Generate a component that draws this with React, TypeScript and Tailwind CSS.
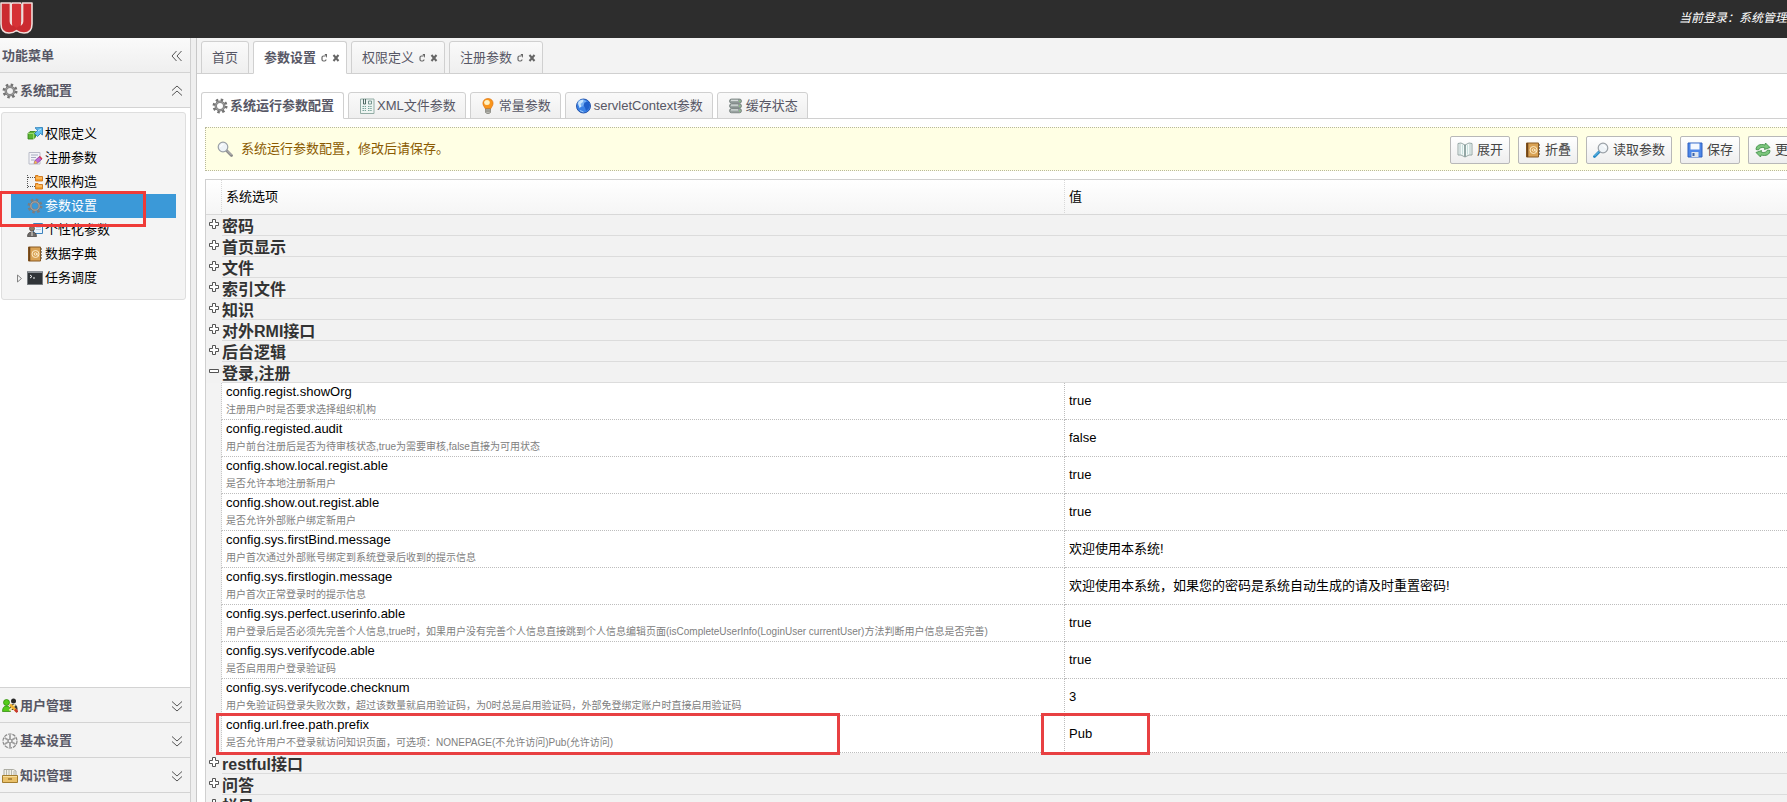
import type { ReactNode } from "react";

const sans = "font-['Liberation_Sans','Noto_Sans_CJK_SC',sans-serif]";

function Svg({ children, className = "size-4", box = "0 0 16 16" }: { children: ReactNode; className?: string; box?: string }) {
  return (
    <svg viewBox={box} className={`block shrink-0 ${className}`} fill="none" aria-hidden="true">
      {children}
    </svg>
  );
}

function Logo() {
  return (
    <Svg className="h-8 w-[33px]" box="0 0 33 32">
      <path
        d="M1 1H10.500V19.500Q10.500 21.500 12 21.500V1H20.500V21.500Q22.500 21.500 22.500 19.500V1H32V22Q32 31 24 31Q19.500 31 16.500 28.500Q13.500 31 9 31Q1 31 1 22Z"
        fill="#cb2b30"
        stroke="#f2dcd9"
        strokeWidth="1.600"
        strokeLinejoin="round"
      />
      <path d="M10.800 2V19.500Q10.800 22 12.500 23M22.200 2V19.500Q22.200 22 20.500 23" stroke="#f2dcd9" strokeWidth="1.800" />
      <path d="M12 2H21V22.500L16.500 26 12 22.500Z" fill="#d63236" />
    </Svg>
  );
}

function Gear({ color = "#737373", hole = "#f3f3f3" }: { color?: string; hole?: string }) {
  return (
    <Svg>
      <circle cx="8" cy="8" r="6.200" stroke={color} strokeWidth="2.600" strokeDasharray="2.430 2.430" />
      <circle cx="8" cy="8" r="4.200" fill={hole} stroke={color} strokeWidth="2.400" />
      <circle cx="8" cy="8" r="4.200" stroke="#b5b5b5" strokeWidth="0.800" />
    </Svg>
  );
}

function Blocks() {
  return (
    <Svg>
      <path d="M1 7.500 3 5.500H8.500V11L6.500 13H1Z" fill="#5cb531" stroke="#2f7d14" strokeWidth="0.800" />
      <path d="M1 7.500H6.500V13M6.500 7.500 8.500 5.500" stroke="#a9e07f" strokeWidth="0.800" />
      <path d="M9.500 3 8 1.800 15.500 1.500V9L13.500 7.500 10.500 10.500 7.500 7.500 10.500 4.500Z" fill="#65bdee" stroke="#1b74b4" strokeWidth="0.800" />
      <path d="M11 5 14 3" stroke="#c7eafc" />
    </Svg>
  );
}

function NotePencil() {
  return (
    <Svg>
      <path d="M2 2.500H13V14H2Z" fill="#f4f4f8" stroke="#b9bcc8" />
      <path d="M4 5H11M4 7.500H9M4 10H7.500" stroke="#a6acc0" />
      <path d="M7 13.500 8 10.500 12.500 6.500 15 9 10.500 13Z" fill="#c06ad4" stroke="#7b3292" strokeWidth="0.700" />
      <path d="M7 14 8 10.500 10.500 13Z" fill="#f0c14b" />
      <path d="M12.500 6.500 15 9" stroke="#d8394c" strokeWidth="1.500" />
    </Svg>
  );
}

function FolderTree() {
  return (
    <Svg>
      <path d="M.5 1V14M1 3.500H8M1 12.500H8" stroke="#555" strokeDasharray="1 1" />
      <path d="M8.500 1.500H11L12 2.500H15.500V7H8.500Z" fill="#f9a02c" stroke="#c86a0c" strokeWidth="0.800" />
      <path d="M8.500 9.500H11L12 10.500H15.500V15H8.500Z" fill="#f9a02c" stroke="#c86a0c" strokeWidth="0.800" />
      <path d="M9 4H15M9 12H15" stroke="#ffd28a" />
    </Svg>
  );
}

function UserScreen() {
  return (
    <Svg>
      <path d="M6.500 1.500H15.500V11.500H6.500Z" fill="#eaf4fc" stroke="#3c82bd" />
      <path d="M7 2.500H15" stroke="#3c82bd" />
      <path d="M9 5.500H14M9 7.500H14" stroke="#b9d6ec" />
      <circle cx="5" cy="6.500" r="2.500" fill="#8a7766" stroke="#4d4138" strokeWidth="0.700" />
      <path d="M.5 14.500Q.5 10 5 10T9.500 14.500Z" fill="#6d6a68" stroke="#3f3b38" strokeWidth="0.700" />
      <path d="M5 10V14" stroke="#e6e0da" />
    </Svg>
  );
}

function Book() {
  return (
    <Svg>
      <path d="M1.500 1H13.500V15H1.500Z" fill="#d9a254" stroke="#8a5a22" />
      <path d="M2.500 1V15" stroke="#6f4519" strokeWidth="1.600" />
      <path d="M14.500 2V14" stroke="#8e8e8e" strokeDasharray="2 1" />
      <circle cx="8.500" cy="8" r="3.500" stroke="#fff0cf" strokeWidth="0.900" />
      <circle cx="8.500" cy="8" r="1.300" stroke="#fff0cf" strokeWidth="0.900" />
      <path d="M10 7V9L12 9.500" stroke="#fff0cf" strokeWidth="0.800" />
    </Svg>
  );
}

function Terminal() {
  return (
    <Svg>
      <path d="M0 1.500H16V14.500H0Z" fill="#303438" />
      <path d="M0 2H16" stroke="#8c9196" strokeWidth="2" />
      <path d="M.5 2V14.500H15.500V2" stroke="#777c80" />
      <path d="M3 5 5 6.500 3 8M6 8H8" stroke="#f1f1f1" />
    </Svg>
  );
}

function Users() {
  return (
    <Svg>
      <circle cx="11.500" cy="3" r="2.500" fill="#272727" />
      <path d="M8 9Q8.500 6 11.500 6T15.500 10V12H8Z" fill="#383838" />
      <circle cx="4.500" cy="4.500" r="3" fill="#54cc19" stroke="#278400" strokeWidth="0.700" />
      <path d="M.5 13.500Q.5 8 4.500 8T8.500 13.500Z" fill="#54cc19" stroke="#278400" strokeWidth="0.700" />
      <path d="M7.500 12.500 13 6.500" stroke="#f7e3a0" strokeWidth="2" />
      <path d="M8 6.500 14.500 13" stroke="#f2b32f" strokeWidth="2.500" />
      <path d="M13 11.500 15.500 14" stroke="#c7382e" strokeWidth="2.500" />
    </Svg>
  );
}

function Wheel() {
  return (
    <Svg>
      <circle cx="8" cy="8" r="7" fill="#f4f4f4" stroke="#8a8a8a" strokeWidth="1.200" strokeDasharray="3.500 0.900" />
      <circle cx="8" cy="8" r="2" stroke="#7d7d7d" />
      <path d="M8 2.500V5.500M8 10.500V13.500M3.200 5.200 5.800 6.800M10.200 9.200 12.800 10.800M12.800 5.200 10.200 6.800M5.800 9.200 3.200 10.800" stroke="#a0a0a0" strokeWidth="1.800" strokeLinecap="round" />
    </Svg>
  );
}

function Drawer() {
  return (
    <Svg>
      <path d="M2 8V1.500H11.500L14 3V8Z" fill="#f1f1ea" stroke="#9a9a90" strokeWidth="0.800" />
      <path d="M4.500 7V2M7 7V2M9.500 7V2M12 7V3" stroke="#a9a99f" strokeWidth="0.800" />
      <path d="M.5 7.500H15.500V14.500H.5Z" fill="#e9c069" stroke="#a37d2e" />
      <path d="M1 8.500H15" stroke="#f8dfa0" />
      <path d="M6 11H10" stroke="#8a6520" strokeWidth="1.200" />
    </Svg>
  );
}

function XmlSheet() {
  return (
    <Svg>
      <path d="M1.500 1H15V15.500H1.500Z" fill="#eef5f2" stroke="#93aca5" />
      <path d="M4.500 1V6H6.500V1" stroke="#3f5a55" strokeWidth="0.900" />
      <path d="M9.500 3H12.500V6H9.500Z" stroke="#6d8f88" strokeWidth="0.900" />
      <path d="M3.500 8.500H7M9 8.500H13M3.500 10.500H7M9 10.500H13M3.500 12.500H7M9 12.500H13" stroke="#7ba59b" strokeDasharray="1.500 .7" />
    </Svg>
  );
}

function Bulb() {
  return (
    <Svg>
      <path d="M7 .5C2.500.5.5 5 3 8.500L4.500 11H9.500L11 8.500C13.500 5 11.500.5 7 .5Z" fill="#f9951c" stroke="#d96b05" strokeWidth="0.600" />
      <ellipse cx="6" cy="4.500" rx="2.800" ry="2.500" fill="#fff2c4" />
      <path d="M4.500 11H9.500V14.500L8 15.500H6L4.500 14.500Z" fill="#b9b9b3" stroke="#77776f" strokeWidth="0.700" />
      <path d="M5 13H9" stroke="#6a6a62" strokeWidth="0.700" />
    </Svg>
  );
}

function Globe() {
  return (
    <Svg>
      <circle cx="7.500" cy="8" r="7" fill="#3b82e6" stroke="#1a4aa4" strokeWidth="0.900" />
      <ellipse cx="6" cy="5" rx="4.500" ry="3.500" fill="#8cc0f8" opacity=".7" />
      <path d="M2 5C3.500 2 5.500 1.500 7.500 1.800L7 4 4.500 6 5.500 8.500 3.500 10Z" fill="#c9e5fd" />
      <path d="M8.500 4.500 12.500 3.500 14 7 12.500 11 10 13 9 9.500 7.500 7.500Z" fill="#1f5fc9" />
      <path d="M4 12.500 7.500 14" stroke="#9ccaf8" />
    </Svg>
  );
}

function Database() {
  return (
    <Svg>
      {[1, 5.8, 10.6].map((y) => (
        <g key={y}>
          <rect x="1.500" y={y} width="12" height="4.200" rx="2" fill="#9aa3a1" stroke="#66716f" strokeWidth="0.700" />
          <path d={`M3 ${y + 1.3}H10`} stroke="#e6ecea" />
          <path d={`M11 ${y + 2.3}H12.500`} stroke="#7ed06d" />
        </g>
      ))}
    </Svg>
  );
}

function Magnifier({ handle }: { handle: string }) {
  return (
    <Svg className={handle === "blue" ? "size-4 -scale-x-100" : "size-4"}>
      <path d="M9.500 9.500 14.500 14.500" stroke={handle === "blue" ? "#2489c5" : "#8b8b8b"} strokeWidth="2.800" strokeLinecap="round" />
      <path d="M10 9.500 14.500 14" stroke={handle === "blue" ? "#8ad0f2" : "#c9c9c9"} strokeWidth="0.800" />
      <circle cx="6" cy="6" r="4.800" fill="#eef3f7" stroke="#9aa0a6" strokeWidth="1.200" />
      <path d="M3.500 6Q4 3.500 6.500 3.500" stroke="#fff" strokeWidth="1.200" />
    </Svg>
  );
}

function OpenBook() {
  return (
    <Svg>
      <path d="M1 1.500 4 1 8 3 12 1 15 1.500V13L12 13 8 15 4 13 1 13Z" fill="#f4faf9" stroke="#8c9e9c" strokeWidth="0.900" />
      <path d="M8 3V14.500" stroke="#53706d" strokeWidth="1.200" />
      <path d="M3 1.500V13M13 1.500V13" stroke="#a9bfbd" strokeWidth="0.900" />
      <path d="M5.500 3V12.500M10.500 3V12.500" stroke="#c3dcd9" strokeWidth="0.900" />
    </Svg>
  );
}

function Floppy() {
  return (
    <Svg>
      <path d="M1 1H15V15H1Z" fill="#4d86e8" stroke="#2f61c0" />
      <path d="M3.500 1.500H12.500V7.500H3.500Z" fill="#f4f8ff" />
      <path d="M4.500 10H11.500V15H4.500Z" fill="#dfe6ee" />
      <path d="M5.500 11H7.500V14H5.500Z" fill="#3b62a8" />
    </Svg>
  );
}

function Refresh() {
  return (
    <Svg>
      <path d="M1 7.500C1 3.500 5 1.500 10 3L10.500 1 15 5.500 9.500 7.500 9.800 5.800C7 5 4.500 5.500 3.500 8Z" fill="#7cc67c" stroke="#3a8a42" strokeWidth="0.800" />
      <path d="M15 8.500C15 12.500 11 14.500 6 13L5.500 15 1 10.500 6.500 8.500 6.200 10.200C9 11 11.500 10.500 12.500 8Z" fill="#7cc67c" stroke="#3a8a42" strokeWidth="0.800" />
    </Svg>
  );
}

function Chevrons({ turn }: { turn: string }) {
  return (
    <Svg className={`size-3 ${turn}`} box="0 0 12 12">
      <path d="M1 5.500 6 1 11 5.500M1 10.500 6 6 11 10.500" stroke="#555" />
    </Svg>
  );
}

function Toggle({ open }: { open?: boolean }) {
  return (
    <Svg className="size-[10px]" box="0 0 10 10">
      <path d={open ? "M.5 3.500H9.500V6.500H.5Z" : "M3.500.5H6.500V3.500H9.500V6.500H6.500V9.500H3.500V6.500H.5V3.500H3.500Z"} fill="#fff" stroke="#555" />
    </Svg>
  );
}

const tree = [
  { label: "权限定义", icon: <Blocks /> },
  { label: "注册参数", icon: <NotePencil /> },
  { label: "权限构造", icon: <FolderTree /> },
  { label: "参数设置", icon: <Gear color="#7d7d7d" hole="#3b99d8" />, active: true },
  { label: "个性化参数", icon: <UserScreen /> },
  { label: "数据字典", icon: <Book /> },
  { label: "任务调度", icon: <Terminal />, branch: true },
];

const sections = [
  { label: "用户管理", icon: <Users /> },
  { label: "基本设置", icon: <Wheel /> },
  { label: "知识管理", icon: <Drawer /> },
];

const pageTabs = [
  { label: "首页" },
  { label: "参数设置", active: true, closable: true },
  { label: "权限定义", closable: true },
  { label: "注册参数", closable: true },
];

const configTabs = [
  { label: "系统运行参数配置", icon: <Gear hole="#fff" />, active: true },
  { label: "XML文件参数", icon: <XmlSheet /> },
  { label: "常量参数", icon: <Bulb /> },
  { label: "servletContext参数", icon: <Globe /> },
  { label: "缓存状态", icon: <Database /> },
];

const actions = [
  { label: "展开", icon: <OpenBook /> },
  { label: "折叠", icon: <Book /> },
  { label: "读取参数", icon: <Magnifier handle="blue" /> },
  { label: "保存", icon: <Floppy /> },
];

const closedBefore = ["密码", "首页显示", "文件", "索引文件", "知识", "对外RMI接口", "后台逻辑"];
const closedAfter = ["restful接口", "问答", "栏目"];

const options = [
  ["config.regist.showOrg", "注册用户时是否要求选择组织机构", "true"],
  ["config.registed.audit", "用户前台注册后是否为待审核状态,true为需要审核,false直接为可用状态", "false"],
  ["config.show.local.regist.able", "是否允许本地注册新用户", "true"],
  ["config.show.out.regist.able", "是否允许外部账户绑定新用户", "true"],
  ["config.sys.firstBind.message", "用户首次通过外部账号绑定到系统登录后收到的提示信息", "欢迎使用本系统!"],
  ["config.sys.firstlogin.message", "用户首次正常登录时的提示信息", "欢迎使用本系统，如果您的密码是系统自动生成的请及时重置密码!"],
  ["config.sys.perfect.userinfo.able", "用户登录后是否必须先完善个人信息,true时，如果用户没有完善个人信息直接跳到个人信息编辑页面(isCompleteUserInfo(LoginUser currentUser)方法判断用户信息是否完善)", "true"],
  ["config.sys.verifycode.able", "是否启用用户登录验证码", "true"],
  ["config.sys.verifycode.checknum", "用户免验证码登录失败次数，超过该数量就启用验证码，为0时总是启用验证码，外部免登绑定账户时直接启用验证码", "3"],
  ["config.url.free.path.prefix", "是否允许用户不登录就访问知识页面，可选项：NONEPAGE(不允许访问)Pub(允许访问)", "Pub"],
];

function GroupRow({ label, open }: { label: string; open?: boolean }) {
  return (
    <tr className="h-[21px] bg-[#f2f2f2]">
      <td className="p-0 pl-[3px] align-top">
        <button type="button" aria-label={label} aria-expanded={!!open} className="block pt-1">
          <Toggle open={open} />
        </button>
      </td>
      <td colSpan={2} className="border-b border-[#dcdcdc] p-0">
        <div className="h-5 text-[16px] leading-6 font-bold text-[#333]">{label}</div>
      </td>
    </tr>
  );
}

function SectionButton({ label, icon, open }: { label: string; icon: ReactNode; open?: boolean }) {
  return (
    <button
      type="button"
      aria-expanded={!!open}
      className={`flex h-[35px] w-full shrink-0 items-center gap-[2px] border-[#d3d3d3] bg-[#f3f3f3] pt-[2px] pr-[7px] pl-[2px] text-left text-[13px] font-bold text-[#575765] ${open ? "border-b" : "border-t"}`}
    >
      {icon}
      <span className="grow">{label}</span>
      <Chevrons turn={open ? "" : "rotate-180"} />
    </button>
  );
}

export default function App() {
  return (
    <div className={`flex h-screen flex-col overflow-hidden bg-white text-[13px] leading-5 text-black ${sans}`}>
      <header className="flex h-[38px] shrink-0 justify-between bg-[#2d2d2d]">
        <div className="pt-[2px]">
          <Logo />
        </div>
        <p className="pt-2 text-[12px] whitespace-nowrap text-white italic">当前登录：系统管理</p>
      </header>

      <div className="flex min-h-0 grow bg-[#efefef]">
        <aside className="relative flex w-[191px] shrink-0 flex-col border-r border-[#d0d0d0] bg-white">
          <div className="flex h-[35px] shrink-0 items-center justify-between border-b border-[#d3d3d3] bg-linear-to-b from-[#fafafa] to-[#efefef] pt-[2px] pr-[7px] pl-[2px]">
            <h2 className="font-bold text-[#575765]">功能菜单</h2>
            <button type="button" aria-label="收起">
              <Chevrons turn="-rotate-90" />
            </button>
          </div>
          <SectionButton label="系统配置" icon={<Gear />} open />
          <div className="min-h-0 grow pt-1 pr-1 pl-px">
            <ul className="rounded-[3px] border border-[#dedede] bg-[#f4f4f4] pt-[9px] pr-[9px] pb-[9px] pl-[9px]">
              {tree.map((item) => (
                <li key={item.label}>
                  <a
                    href="#"
                    className={`flex h-6 items-center gap-[2px] ${item.active ? "bg-[#3b99d8] text-white" : ""}`}
                  >
                    <span className="flex w-[14px] shrink-0 pl-[6px]">
                      {item.branch && (
                        <Svg className="h-[9px] w-[5px]" box="0 0 5 9">
                          <path d="M.5 1 4.500 4.500 .5 8Z" stroke="#777" strokeWidth="0.900" />
                        </Svg>
                      )}
                    </span>
                    {item.icon}
                    {item.label}
                  </a>
                </li>
              ))}
            </ul>
          </div>
          {sections.map((s) => (
            <SectionButton key={s.label} {...s} />
          ))}
          <div className="h-[10px] shrink-0 border-t border-[#d3d3d3] bg-[#f3f3f3]" />
          <div className="pointer-events-none absolute top-[153px] left-0 h-9 w-[146px] border-3 border-l-2 border-[#ef3b38]" />
        </aside>

        <main className="ml-[5px] flex min-w-0 grow flex-col border-l border-[#c8c8c8] bg-white">
          <nav className="flex h-9 shrink-0 items-end gap-1 border-b border-[#d0d0d0] bg-[#f3f3f3] pl-1">
            {pageTabs.map((t) => (
              <div
                key={t.label}
                className={`-mb-px flex h-[33px] items-center rounded-t-[3px] border border-[#d0d0d0] pl-[10px] text-[#575765] ${t.closable ? "pr-[6px]" : "pr-[10px]"} ${t.active ? "border-b-white bg-white font-bold" : "bg-linear-to-b from-[#fafafa] to-[#efefef]"}`}
              >
                <button type="button">{t.label}</button>
                {t.closable && (
                  <span className="flex gap-1 pl-1">
                    <button type="button" aria-label="刷新">
                      <Svg className="size-2" box="0 0 8 8">
                        <path d="M5.500 2H3.500Q2 2 2 3.500V5.500Q2 7 3.500 7H4.500Q6 7 6 5.500" stroke="#666" strokeWidth="1.200" />
                        <path d="M4.500 0H7V4Z" fill="#666" />
                      </Svg>
                    </button>
                    <button type="button" aria-label="关闭">
                      <Svg className="size-2" box="0 0 8 8">
                        <path d="M1.500 1 6.500 7M6.500 1 1.500 7" stroke="#666" strokeWidth="2" />
                      </Svg>
                    </button>
                  </span>
                )}
              </div>
            ))}
          </nav>

          <nav className="mt-[17px] flex h-[28px] shrink-0 items-end gap-1 border-b border-[#d0d0d0] pl-1">
            {configTabs.map((t) => (
              <button
                key={t.label}
                type="button"
                className={`-mb-px flex h-[27px] items-center gap-[2px] rounded-t-[3px] border border-[#d0d0d0] pr-[9px] pl-[10px] text-[#575765] ${t.active ? "border-b-white bg-white font-bold" : "bg-linear-to-b from-[#fafafa] to-[#efefef]"}`}
              >
                {t.icon}
                {t.label}
              </button>
            ))}
          </nav>

          <section className="mt-2 ml-2 flex h-11 shrink-0 items-center border border-r-0 border-dotted border-[#b8b89c] bg-[#ffffe4]">
            <div className="flex grow items-center gap-2 pl-[11px] text-[#8a5a00]">
              <Magnifier handle="gray" />
              <p>系统运行参数配置，修改后请保存。</p>
            </div>
            <div className="flex gap-2 pt-px">
              {actions.map((a) => (
                <button
                  key={a.label}
                  type="button"
                  className="flex h-7 items-center gap-1 rounded-[2px] border border-[#b8b8b8] bg-linear-to-b from-white to-[#eeeeee] px-[6px] pt-px text-[#444]"
                >
                  {a.icon}
                  {a.label}
                </button>
              ))}
              <button
                type="button"
                className="flex h-7 w-[39px] items-center gap-1 overflow-hidden rounded-l-[2px] border border-r-0 border-[#b8b8b8] bg-linear-to-b from-white to-[#eeeeee] pt-px pl-[6px] text-[#444]"
              >
                <Refresh />更
              </button>
            </div>
          </section>

          <div className="mt-2 ml-2 min-h-0 grow overflow-hidden border-t border-l border-[#d0d0d0]">
            <table className="w-full table-fixed border-separate border-spacing-0 text-left">
              <colgroup>
                <col className="w-4" />
                <col className="w-[843px]" />
                <col />
              </colgroup>
              <thead>
                <tr className="h-[35px] bg-linear-to-b from-white to-[#f5f5f5]">
                  <th aria-label="展开" className="border-r border-b border-[#d8d8d8] p-0 [border-right-style:dotted]" />
                  <th className="border-r border-b border-[#d8d8d8] p-0 pl-1 font-normal [border-right-style:dotted]">系统选项</th>
                  <th className="border-b border-[#d8d8d8] p-0 pl-1 font-normal">值</th>
                </tr>
              </thead>
              <tbody>
                {closedBefore.map((g) => (
                  <GroupRow key={g} label={g} />
                ))}
                <GroupRow label="登录,注册" open />
                {options.map(([name, note, value]) => {
                  const marked = name === "config.url.free.path.prefix";
                  return (
                    <tr key={name} className="h-[37px]">
                      <td className="border-r border-dotted border-[#c8c8c8] bg-[#f3f3f3] p-0" />
                      <td className="relative border-r border-b border-dotted border-[#bdbdbd] p-0 pl-1">
                        <div className="h-9 whitespace-nowrap">
                          <div className="h-[18px] leading-[18px]">{name}</div>
                          <div className="text-[10px] leading-[18px] text-[#808080]">{note}</div>
                        </div>
                        {marked && (
                          <div className="pointer-events-none absolute -top-[3px] -left-[6px] z-10 h-[42px] w-[624px] border-3 border-[#e84042]" />
                        )}
                      </td>
                      <td className="relative border-b border-dotted border-[#bdbdbd] p-0 pl-1">
                        {value}
                        {marked && (
                          <div className="pointer-events-none absolute -top-[3px] -left-6 z-10 h-[42px] w-[109px] border-3 border-[#e84042]" />
                        )}
                      </td>
                    </tr>
                  );
                })}
                {closedAfter.map((g) => (
                  <GroupRow key={g} label={g} />
                ))}
              </tbody>
            </table>
          </div>
        </main>
      </div>
    </div>
  );
}
